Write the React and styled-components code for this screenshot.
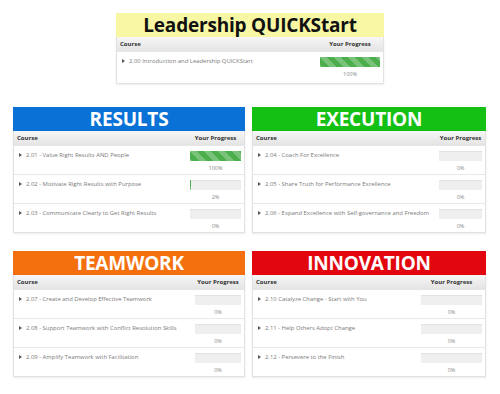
import styled, { createGlobalStyle } from "styled-components";

const GlobalStyle = createGlobalStyle`
  html, body {
    margin: 0;
    padding: 0;
    background: #ffffff;
  }
  body {
    font-family: "Open Sans", "Liberation Sans", sans-serif;
  }
`;

const quickStart = {
  title: "Leadership QUICKStart",
  color: "#f8f8a4",
  dark: true,
  progW: 66,
  courses: [{ name: "2.00 Introduction and Leadership QUICKStart", pct: 100 }],
};

const panels = [
  {
    title: "RESULTS",
    color: "#0a72d6",
    progW: 57,
    courses: [
      { name: "2.01 - Value Right Results AND People", pct: 100 },
      { name: "2.02 - Motivate Right Results with Purpose", pct: 2 },
      { name: "2.03 - Communicate Clearly to Get Right Results", pct: 0 },
    ],
  },
  {
    title: "EXECUTION",
    color: "#14c014",
    progW: 49,
    courses: [
      { name: "2.04 - Coach For Excellence", pct: 0 },
      { name: "2.05 - Share Truth for Performance Excellence", pct: 0 },
      {
        name: "2.06 - Expand Excellence with Self-governance and Freedom",
        pct: 0,
      },
    ],
  },
  {
    title: "TEAMWORK",
    color: "#f4700f",
    progW: 52,
    courses: [
      { name: "2.07 - Create and Develop Effective Teamwork", pct: 0 },
      { name: "2.08 - Support Teamwork with Conflict Resolution Skills", pct: 0 },
      { name: "2.09 - Amplify Teamwork with Facilitation", pct: 0 },
    ],
  },
  {
    title: "INNOVATION",
    color: "#e2070f",
    progW: 67,
    courses: [
      { name: "2.10 Catalyze Change - Start with You", pct: 0 },
      { name: "2.11 - Help Others Adopt Change", pct: 0 },
      { name: "2.12 - Persevere to the Finish", pct: 0 },
    ],
  },
];

function Panel({ panel }) {
  return (
    <PanelBox>
      <Banner $color={panel.color} $dark={panel.dark}>
        {panel.title}
      </Banner>
      <Table>
        <HeadRow $progW={panel.progW}>
          <HeadCell>Course</HeadCell>
          <HeadCell $center>Your Progress</HeadCell>
        </HeadRow>
        {panel.courses.map((c) => (
          <Row key={c.name} $progW={panel.progW} $tall={panel.dark}>
            <CourseName>
              <Arrow />
              {c.name}
            </CourseName>
            <Progress>
              <Bar>
                <Fill style={{ width: `${c.pct}%` }} />
              </Bar>
              <Pct>{c.pct}%</Pct>
            </Progress>
          </Row>
        ))}
      </Table>
    </PanelBox>
  );
}

export default function App() {
  return (
    <>
      <GlobalStyle />
      <Page>
        <TopWrap>
          <Panel panel={quickStart} />
        </TopWrap>
        <Grid>
          {panels.map((p) => (
            <Panel key={p.title} panel={p} />
          ))}
        </Grid>
      </Page>
    </>
  );
}

const Page = styled.div`
  width: 500px;
  height: 394px;
  padding: 13px 14px 0 13px;
  box-sizing: border-box;
  display: flex;
  flex-direction: column;
  gap: 23px;
`;

const TopWrap = styled.div`
  width: 268px;
  align-self: center;
  margin-left: 1px;
`;

const Grid = styled.div`
  display: grid;
  grid-template-columns: 232px 234px;
  column-gap: 7px;
  row-gap: 18px;
`;

const PanelBox = styled.div`
  display: flex;
  flex-direction: column;
`;

const Banner = styled.div`
  height: 24px;
  background: ${(p) => p.$color};
  color: ${(p) => (p.$dark ? "#111" : "#fff")};
  font-family: "Open Sans", "Liberation Sans", sans-serif;
  font-weight: 700;
  font-size: 19px;
  line-height: 24px;
  text-align: center;
  letter-spacing: -0.2px;
`;

const Table = styled.div`
  border: 1px solid #e2e2e2;
  border-top: none;
  box-shadow: 0 1px 2px rgba(0, 0, 0, 0.08);
  background: #fff;
`;

const HeadRow = styled.div`
  display: grid;
  grid-template-columns: 1fr ${(p) => p.$progW}px;
  height: 14px;
  align-items: center;
  background: linear-gradient(#f6f6f6, #e4e4e4);
  border-bottom: 1px solid #e6e6e6;
`;

const HeadCell = styled.div`
  font-size: 6px;
  font-weight: 700;
  color: #333;
  padding: 0 3px;
  text-align: ${(p) => (p.$center ? "center" : "left")};
  white-space: nowrap;
`;

const Row = styled.div`
  display: grid;
  grid-template-columns: 1fr ${(p) => p.$progW}px;
  height: ${(p) => (p.$tall ? 31 : 28)}px;
  border-bottom: 1px solid #e8e8e8;
  &:last-child {
    border-bottom: none;
  }
`;

const CourseName = styled.div`
  display: flex;
  align-items: center;
  gap: 4px;
  height: 10px;
  margin-top: 4px;
  padding-left: 5px;
  font-size: 5.9px;
  color: #7a7a7a;
  white-space: nowrap;
`;

const Arrow = styled.span`
  width: 0;
  height: 0;
  border-left: 3px solid #555;
  border-top: 2px solid transparent;
  border-bottom: 2px solid transparent;
`;

const Progress = styled.div`
  display: flex;
  flex-direction: column;
  align-items: stretch;
  padding: 5px 3px 0 3px;
`;

const Bar = styled.div`
  height: 10px;
  background: #efefef;
  box-shadow: inset 0 1px 1px rgba(0, 0, 0, 0.06);
  overflow: hidden;
`;

const Fill = styled.div`
  height: 100%;
  background-color: #4cae4c;
  background-image: linear-gradient(
    45deg,
    rgba(255, 255, 255, 0.25) 25%,
    transparent 25%,
    transparent 50%,
    rgba(255, 255, 255, 0.25) 50%,
    rgba(255, 255, 255, 0.25) 75%,
    transparent 75%,
    transparent
  );
  background-size: 14px 14px;
`;

const Pct = styled.div`
  font-size: 5.5px;
  color: #888;
  text-align: center;
  margin-top: 3px;
`;
